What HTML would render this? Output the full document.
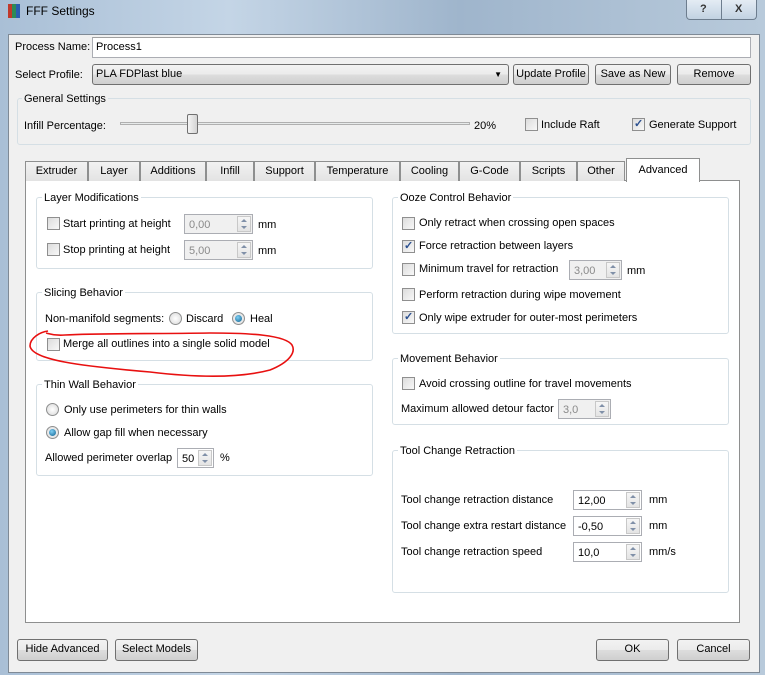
<!DOCTYPE html>
<html><head><meta charset="utf-8"><style>
*{box-sizing:border-box;margin:0;padding:0}
body{width:765px;height:675px;overflow:hidden;position:relative;font:11px "Liberation Sans",sans-serif;color:#000;background:linear-gradient(90deg,#a9bfd6,#c4d5e6 30%,#9fb5cc 60%,#b8cadb)}
.a{position:absolute}
.t{position:absolute;white-space:nowrap;line-height:14px;font-size:11px}
.btn{position:absolute;white-space:nowrap;border:1px solid #707070;border-radius:3px;background:linear-gradient(#f2f2f2,#ebebeb 50%,#dddddd 51%,#cfcfcf);text-align:center;line-height:19px;font-size:11px}
.inp{position:absolute;background:#fff;border:1px solid #abadb3;border-top-color:#a0a0a0}
.cb{position:absolute;width:13px;height:13px;border:1px solid #8f8f8f;background:linear-gradient(135deg,#dcdcdc,#f8f8f8)}
.cb.k::after{content:"✓";position:absolute;left:1px;top:-2px;font-size:11px;color:#2a4f8f;font-weight:bold}
.rd{position:absolute;width:13px;height:13px;border-radius:50%;border:1px solid #8e8f8f;background:radial-gradient(#fff,#d8d8d8)}
.rd.k::after{content:"";position:absolute;left:2px;top:2px;width:7px;height:7px;border-radius:50%;background:radial-gradient(circle at 40% 35%,#7fd0f5,#0d5f8e)}
.grp{position:absolute;border:1px solid #d5dfe5;border-radius:3px}
.gt{position:absolute;background:#fff;padding:0 2px;white-space:nowrap;line-height:14px}
.sp{position:absolute;background:#fff;border:1px solid #abadb3}
.sp.d{background:#f0f0f0;color:#8a8a8a}
.sp span{position:absolute;left:4px;top:3px;line-height:14px}
.sp i{position:absolute;right:1px;top:1px;bottom:1px;width:14px;border:1px solid #c8c8c8;background:linear-gradient(#f6f6f6,#e4e4e4)}
.sp i::before{content:"";position:absolute;left:3px;top:2px;border:3px solid transparent;border-bottom:3px solid #8090a8;border-top:0}
.sp i::after{content:"";position:absolute;left:3px;bottom:2px;border:3px solid transparent;border-top:3px solid #8090a8;border-bottom:0}
.tab{position:absolute;top:161px;height:20px;white-space:nowrap;border:1px solid #8e8f8f;border-bottom:none;background:linear-gradient(#f2f2f2,#e3e3e3);text-align:center;line-height:19px}
</style></head><body>
<div class="a" style="left:8px;top:4px;width:4px;height:14px;background:#c0392b"></div>
<div class="a" style="left:12px;top:4px;width:4px;height:14px;background:#2e8b57"></div>
<div class="a" style="left:16px;top:4px;width:4px;height:14px;background:#2a5db0"></div>
<div class="t" style="left:26px;top:4px;font-size:12px">FFF Settings</div>
<div class="a" style="left:686px;top:0;width:71px;height:20px;border:1px solid #6d7d8e;border-top:none;border-radius:0 0 4px 4px;background:linear-gradient(#e4ecf4,#c2d2e2)"></div>
<div class="a" style="left:721px;top:0;width:1px;height:20px;background:#6d7d8e"></div>
<div class="t" style="left:700px;top:2px;font-weight:bold;color:#333">?</div>
<div class="t" style="left:735px;top:2px;font-weight:bold;color:#333">X</div>
<div class="a" style="left:8px;top:34px;width:752px;height:639px;background:#f0f0f0;border:1px solid #7f8a96"></div>
<div class="t" style="left:15px;top:40px">Process Name:</div>
<div class="inp" style="left:92px;top:37px;width:659px;height:21px"></div>
<div class="t" style="left:96px;top:40px">Process1</div>
<div class="t" style="left:15px;top:68px">Select Profile:</div>
<div class="btn" style="left:92px;top:64px;width:417px;height:21px;text-align:left;padding-left:3px">PLA FDPlast blue<span style="position:absolute;right:6px;font-size:8px">▼</span></div>
<div class="btn" style="left:513px;top:64px;width:76px;height:21px">Update Profile</div>
<div class="btn" style="left:595px;top:64px;width:76px;height:21px">Save as New</div>
<div class="btn" style="left:677px;top:64px;width:74px;height:21px">Remove</div>
<div class="a" style="left:17px;top:98px;width:734px;height:47px;border:1px solid #d5dfe5;border-radius:3px"></div>
<div class="t" style="left:22px;top:92px;background:#f0f0f0;padding:0 2px">General Settings</div>
<div class="t" style="left:24px;top:119px">Infill Percentage:</div>
<div class="a" style="left:120px;top:122px;width:350px;height:3px;border:1px solid #b0b0b0;background:#e7eaea"></div>
<div class="a" style="left:187px;top:114px;width:11px;height:20px;border:1px solid #707070;border-radius:2px;background:linear-gradient(90deg,#f4f4f4,#d4d4d4)"></div>
<div class="t" style="left:474px;top:119px">20%</div>
<div class="cb" style="left:525px;top:118px"></div>
<div class="t" style="left:541px;top:118px">Include Raft</div>
<div class="cb k" style="left:632px;top:118px"></div>
<div class="t" style="left:649px;top:118px">Generate Support</div>
<div class="a" style="left:25px;top:180px;width:715px;height:443px;background:#fff;border:1px solid #8e8f8f"></div>
<div class="tab" style="left:25px;width:63px">Extruder</div>
<div class="tab" style="left:88px;width:52px">Layer</div>
<div class="tab" style="left:140px;width:66px">Additions</div>
<div class="tab" style="left:206px;width:48px">Infill</div>
<div class="tab" style="left:254px;width:61px">Support</div>
<div class="tab" style="left:315px;width:85px">Temperature</div>
<div class="tab" style="left:400px;width:59px">Cooling</div>
<div class="tab" style="left:459px;width:61px">G-Code</div>
<div class="tab" style="left:520px;width:57px">Scripts</div>
<div class="tab" style="left:577px;width:48px">Other</div>
<div class="tab" style="left:626px;top:158px;width:74px;height:24px;background:#fff;line-height:22px">Advanced</div>
<div class="grp" style="left:36px;top:197px;width:337px;height:72px"></div>
<div class="gt" style="left:42px;top:191px">Layer Modifications</div>
<div class="cb" style="left:47px;top:217px"></div><div class="t" style="left:63px;top:217px">Start printing at height</div>
<div class="sp d" style="left:184px;top:214px;width:69px;height:20px"><span>0,00</span><i></i></div><div class="t" style="left:258px;top:218px">mm</div>
<div class="cb" style="left:47px;top:243px"></div><div class="t" style="left:63px;top:243px">Stop printing at height</div>
<div class="sp d" style="left:184px;top:240px;width:69px;height:20px"><span>5,00</span><i></i></div><div class="t" style="left:258px;top:244px">mm</div>
<div class="grp" style="left:36px;top:292px;width:337px;height:69px"></div>
<div class="gt" style="left:42px;top:286px">Slicing Behavior</div>
<div class="t" style="left:45px;top:312px">Non-manifold segments:</div>
<div class="rd" style="left:169px;top:312px"></div><div class="t" style="left:186px;top:312px">Discard</div>
<div class="rd k" style="left:232px;top:312px"></div><div class="t" style="left:250px;top:312px">Heal</div>
<div class="cb" style="left:47px;top:338px"></div><div class="t" style="left:63px;top:337px">Merge all outlines into a single solid model</div>
<div class="grp" style="left:36px;top:384px;width:337px;height:92px"></div>
<div class="gt" style="left:42px;top:378px">Thin Wall Behavior</div>
<div class="rd" style="left:46px;top:403px"></div><div class="t" style="left:64px;top:403px">Only use perimeters for thin walls</div>
<div class="rd k" style="left:46px;top:426px"></div><div class="t" style="left:64px;top:426px">Allow gap fill when necessary</div>
<div class="t" style="left:45px;top:451px">Allowed perimeter overlap</div>
<div class="sp" style="left:177px;top:448px;width:37px;height:20px"><span>50</span><i></i></div><div class="t" style="left:220px;top:451px">%</div>
<div class="grp" style="left:392px;top:197px;width:337px;height:137px"></div>
<div class="gt" style="left:398px;top:191px">Ooze Control Behavior</div>
<div class="cb" style="left:402px;top:217px"></div><div class="t" style="left:419px;top:216px">Only retract when crossing open spaces</div>
<div class="cb k" style="left:402px;top:240px"></div><div class="t" style="left:419px;top:239px">Force retraction between layers</div>
<div class="cb" style="left:402px;top:263px"></div><div class="t" style="left:419px;top:262px">Minimum travel for retraction</div>
<div class="sp d" style="left:569px;top:260px;width:53px;height:20px"><span>3,00</span><i></i></div><div class="t" style="left:627px;top:264px">mm</div>
<div class="cb" style="left:402px;top:288px"></div><div class="t" style="left:419px;top:288px">Perform retraction during wipe movement</div>
<div class="cb k" style="left:402px;top:311px"></div><div class="t" style="left:419px;top:311px">Only wipe extruder for outer-most perimeters</div>
<div class="grp" style="left:392px;top:358px;width:337px;height:67px"></div>
<div class="gt" style="left:398px;top:352px">Movement Behavior</div>
<div class="cb" style="left:402px;top:377px"></div><div class="t" style="left:419px;top:377px">Avoid crossing outline for travel movements</div>
<div class="t" style="left:401px;top:402px">Maximum allowed detour factor</div>
<div class="sp d" style="left:558px;top:399px;width:53px;height:20px"><span>3,0</span><i></i></div>
<div class="grp" style="left:392px;top:450px;width:337px;height:143px"></div>
<div class="gt" style="left:398px;top:444px">Tool Change Retraction</div>
<div class="t" style="left:401px;top:493px">Tool change retraction distance</div>
<div class="sp" style="left:573px;top:490px;width:69px;height:20px"><span>12,00</span><i></i></div><div class="t" style="left:649px;top:493px">mm</div>
<div class="t" style="left:401px;top:519px">Tool change extra restart distance</div>
<div class="sp" style="left:573px;top:516px;width:69px;height:20px"><span>-0,50</span><i></i></div><div class="t" style="left:649px;top:519px">mm</div>
<div class="t" style="left:401px;top:545px">Tool change retraction speed</div>
<div class="sp" style="left:573px;top:542px;width:69px;height:20px"><span>10,0</span><i></i></div><div class="t" style="left:649px;top:545px">mm/s</div>
<div class="btn" style="left:17px;top:639px;width:91px;height:22px">Hide Advanced</div>
<div class="btn" style="left:115px;top:639px;width:83px;height:22px">Select Models</div>
<div class="btn" style="left:596px;top:639px;width:73px;height:22px">OK</div>
<div class="btn" style="left:677px;top:639px;width:73px;height:22px">Cancel</div>
<svg class="a" style="left:0;top:0" width="765" height="675"><path d="M48,331 C40,332 30,338 30,346 C32,360 80,366 150,372 C200,378 240,378 270,370 C290,362 296,352 292,345 C285,335 250,333 210,333 C150,334 100,333 65,335 C55,336 50,334 46,333" fill="none" stroke="#e81010" stroke-width="1.6"/></svg>
</body></html>
